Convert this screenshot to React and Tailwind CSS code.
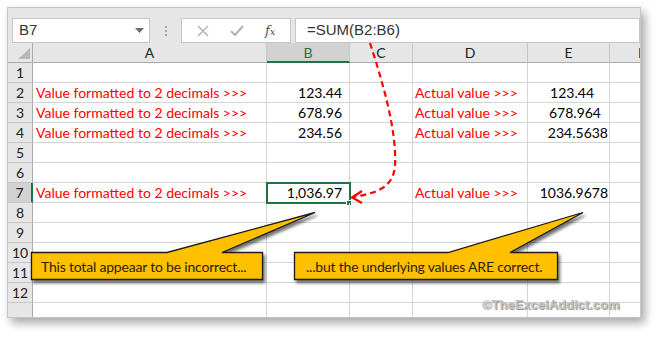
import React from "react";

const cellFont = "font-['Lato','Open_Sans',sans-serif]";

const rows = [
  { n: 1 },
  { n: 2, a: "Value formatted to 2 decimals >>>", b: "123.44", d: "Actual value >>>", e: "123.44", ePad: "pr-[15px]" },
  { n: 3, a: "Value formatted to 2 decimals >>>", b: "678.96", d: "Actual value >>>", e: "678.964", ePad: "pr-[8px]" },
  { n: 4, a: "Value formatted to 2 decimals >>>", b: "234.56", d: "Actual value >>>", e: "234.5638", ePad: "pr-[1px]" },
  { n: 5 },
  { n: 6 },
  { n: 7, a: "Value formatted to 2 decimals >>>", b: "1,036.97", d: "Actual value >>>", e: "1036.9678", ePad: "pr-[1px]", sel: true },
  { n: 8 },
  { n: 9 },
  { n: 10 },
  { n: 11 },
  { n: 12 },
  { n: "" },
];

const Toolbar = () => (
  <div className="flex h-[44px] bg-[#e6e6e6] pt-[10px]">
    {/* name box */}
    <div className="ml-[4px] flex h-[25px] w-[138px] items-center justify-between border border-[#c6c6c6] bg-white pl-[6px] pr-[5px]">
      <span className="font-['Liberation_Sans',sans-serif] text-[15px] text-[#333]">B7</span>
      <svg width="9" height="5" viewBox="0 0 9 5"><path d="M0 0h9L4.5 5z" fill="#6d6d6d" /></svg>
    </div>
    <div className="flex w-[31px] flex-col items-center justify-center gap-[2px]">
      <span className="h-[2px] w-[2px] bg-[#a6a6a6]" />
      <span className="h-[2px] w-[2px] bg-[#a6a6a6]" />
      <span className="h-[2px] w-[2px] bg-[#a6a6a6]" />
    </div>
    {/* cancel / enter / fx */}
    <div className="flex h-[25px] w-[110px] items-center justify-around border border-[#c6c6c6] bg-white px-[4px]">
      <svg width="12" height="12" viewBox="0 0 12 12"><path d="M1 1l10 10M11 1L1 11" stroke="#b4b4b4" strokeWidth="1.5" /></svg>
      <svg width="14" height="11" viewBox="0 0 14 11"><path d="M1 6l4 4 8-9" stroke="#b4b4b4" strokeWidth="2.2" fill="none" /></svg>
      <span className="font-['DejaVu_Serif',serif] text-[13px] italic text-[#555]">f<span className="text-[10px]">x</span></span>
    </div>
    <div className="ml-[4px] flex h-[25px] flex-1 items-center border border-[#c6c6c6] bg-white pl-[11px]">
      <span className="font-['Liberation_Sans',sans-serif] text-[15px] text-[#333]">=SUM(B2:B6)</span>
    </div>
  </div>
);

const HeaderRow = () => (
  <div className={`flex h-[20px] ${cellFont} text-[14px] text-[#222]`}>
    <div className="flex w-[25px] shrink-0 items-end justify-end border-r border-b border-[#ababab] bg-[#e6e6e6] pb-[3px] pr-[2px]">
      <svg width="12" height="11" viewBox="0 0 12 11"><path d="M0 11L12 0v11z" fill="#b7b7b7" /></svg>
    </div>
    <div className="flex w-[234px] shrink-0 items-center justify-center border-r border-b border-[#ababab] border-r-[#c6c6c6] bg-[#e6e6e6]">A</div>
    <div className="flex w-[83px] shrink-0 items-center justify-center border-r border-b-2 border-[#c6c6c6] border-b-[#217346] bg-[#d2d2d2] text-[#217346]">B</div>
    <div className="flex w-[63px] shrink-0 items-center justify-center border-r border-b border-[#c6c6c6] border-b-[#ababab] bg-[#e6e6e6]">C</div>
    <div className="flex w-[115px] shrink-0 items-center justify-center border-r border-b border-[#c6c6c6] border-b-[#ababab] bg-[#e6e6e6]">D</div>
    <div className="flex w-[82px] shrink-0 items-center justify-center border-r border-b border-[#c6c6c6] border-b-[#ababab] bg-[#e6e6e6]">E</div>
    <div className="flex w-[64px] shrink-0 items-center justify-center border-b border-[#ababab] bg-[#e6e6e6]">F</div>
  </div>
);

const Row = ({ r }) => (
  <div className={`flex h-[20px] shrink-0 ${cellFont} text-[14px]`}>
    <div
      className={`flex w-[25px] shrink-0 items-center justify-center border-b border-[#c6c6c6] text-[#222] ${
        r.sel ? "border-r-2 border-r-[#217346] bg-[#d2d2d2]" : "border-r border-r-[#ababab] bg-[#e6e6e6]"
      }`}
    >
      {r.n}
    </div>
    <div className="flex w-[234px] shrink-0 items-center border-r border-b border-[#d4d4d4] pl-[3px] text-[#ff0000]">{r.a}</div>
    <div className="relative flex w-[83px] shrink-0 items-center justify-end border-r border-b border-[#d4d4d4] pr-[7px] text-black">
      {r.b}
      {r.sel && (
        <>
          <div className="absolute -left-[1px] -top-[1px] h-[22px] w-[85px] border-2 border-[#217346]" />
          <div className="absolute left-[79px] top-[17px] h-[6px] w-[6px] border border-white bg-[#217346]" />
        </>
      )}
    </div>
    <div className="w-[63px] shrink-0 border-r border-b border-[#d4d4d4]" />
    <div className="flex w-[115px] shrink-0 items-center border-r border-b border-[#d4d4d4] pl-[2px] text-[#ff0000]">{r.d}</div>
    <div className={`flex w-[82px] shrink-0 items-center justify-end border-r border-b border-[#d4d4d4] text-black ${r.ePad || ""}`}>{r.e}</div>
    <div className="w-[64px] shrink-0 border-b border-[#d4d4d4]" />
  </div>
);

const Overlay = () => (
  <svg className="pointer-events-none absolute left-0 top-0" width="661" height="338" viewBox="0 0 661 338">
    <defs>
      <filter id="sh" x="-10%" y="-30%" width="130%" height="170%">
        <feDropShadow dx="2" dy="3" stdDeviation="1.6" floodColor="#000" floodOpacity="0.55" />
      </filter>
    </defs>
    <path
      d="M31.5 252.5H167L315 212.5 222 252.5H262.5V279.5H31.5Z"
      fill="#ffc000"
      stroke="#1a1a1a"
      strokeWidth="1.3"
      filter="url(#sh)"
    />
    <path
      d="M294.5 252.5H448L583 212.5 510 252.5H557.5V279.5H294.5Z"
      fill="#ffc000"
      stroke="#1a1a1a"
      strokeWidth="1.3"
      filter="url(#sh)"
    />
    <path
      d="M370 43C382 80 397 130 395 166C393 190 373 193 354 197"
      fill="none"
      stroke="#ff0000"
      strokeWidth="2.2"
      strokeDasharray="6 4"
    />
    <path d="M362 191L352 197.5L362 203" fill="none" stroke="#ff0000" strokeWidth="2.2" />
  </svg>
);

export default function App() {
  return (
    <div className="relative h-[338px] w-[661px] overflow-hidden bg-white pl-[7px] pt-[7px]">
      <div className="flex h-[311px] w-[634px] flex-col overflow-hidden border border-[#c6c6c6] bg-white shadow-[4px_5px_9px_rgba(0,0,0,0.35)]">
        <Toolbar />
        <HeaderRow />
        {rows.map((r, i) => (
          <Row key={i} r={r} />
        ))}
      </div>

      <Overlay />

      {/* callout texts */}
      <div className="absolute left-[31px] top-[252px] flex h-[28px] w-[232px] items-center whitespace-nowrap pl-[10px] font-['Lato',sans-serif] text-[14px] tracking-[-0.2px] text-[#2b2200]">
        This total appeaar to be incorrect...
      </div>
      <div className="absolute left-[294px] top-[252px] flex h-[28px] w-[264px] items-center whitespace-nowrap pl-[12px] font-['Lato',sans-serif] text-[14px] tracking-[-0.2px] text-[#2b2200]">
        ...but the underlying values ARE correct.
      </div>

      <div className="absolute left-[482px] top-[295px] font-['Liberation_Sans',sans-serif] text-[13px] font-bold text-[#c4c4c4] [text-shadow:1px_1px_1px_#8a8a8a]">
        ©TheExcelAddict.com
      </div>
    </div>
  );
}
